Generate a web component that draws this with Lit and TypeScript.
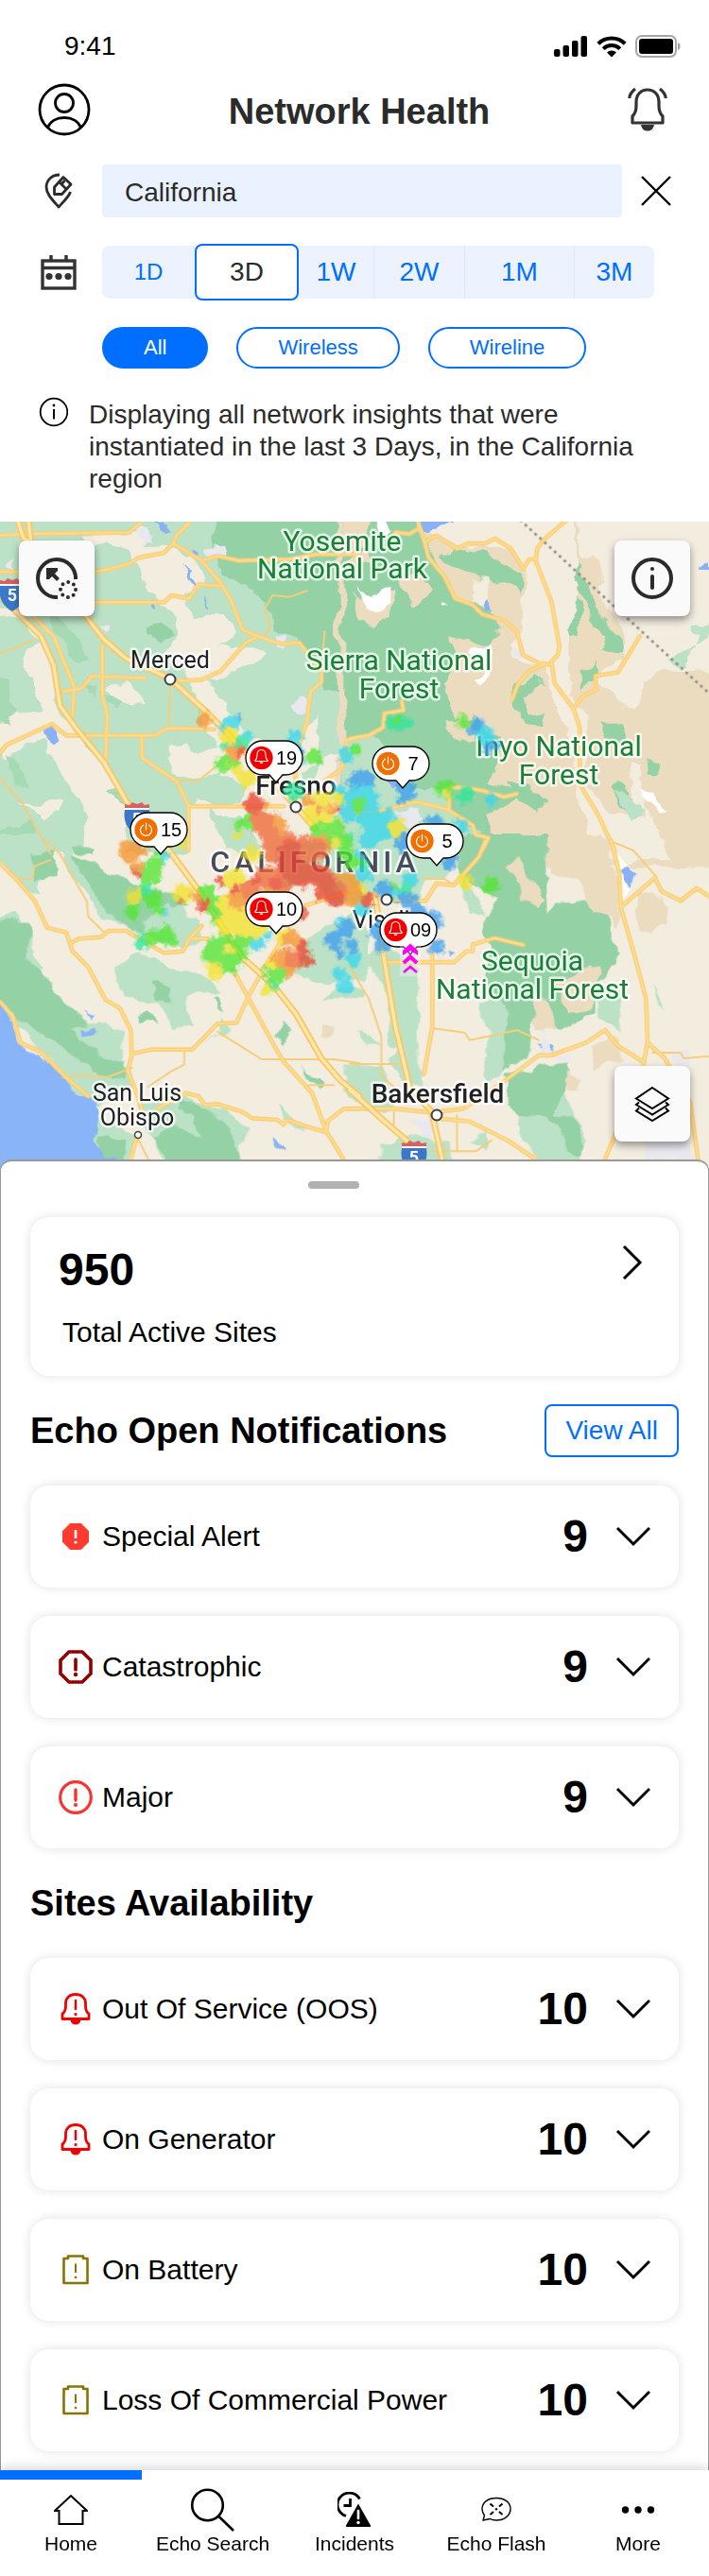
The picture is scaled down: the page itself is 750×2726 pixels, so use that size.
import { LitElement, html, css, svg, nothing } from "lit";
import { customElement, property, state } from "lit/decorators.js";
import { classMap } from "lit/directives/class-map.js";
import { styleMap } from "lit/directives/style-map.js";

const MAP_W = 750;
const MAP_H = 686;

const reset = css`
  *, *::before, *::after { box-sizing: border-box; }
  h1, h2, p, ul { margin: 0; padding: 0; }
  button { margin: 0; padding: 0; border: 0; background: none; font: inherit; color: inherit; cursor: pointer; }
  a { color: inherit; text-decoration: none; }
  svg { display: block; flex: none; }
`;

const bellPath = "M5 38V31C8 28 9 25 9 20V16C9 8 14 3 21 3S33 8 33 16V20C33 25 34 28 37 31V38Z";

const rowIcons: Record<string, unknown> = {
  special: svg`<svg width="28" height="28" viewBox="0 0 28 28"><path d="M8.200 0H19.800L28 8.200V19.800L19.800 28H8.200L0 19.800V8.200Z" fill="#ff3b30"/><path d="M14 7V16" stroke="#fff" stroke-width="2.600"/><circle cx="14" cy="20" r="1.600" fill="#fff"/></svg>`,
  catastrophic: svg`<svg width="36" height="36" viewBox="0 0 36 36"><path d="M11 2H25L34 11V25L25 34H11L2 25V11Z" fill="none" stroke="#8f0000" stroke-width="3.600"/><path d="M18 10V21" stroke="#8f0000" stroke-width="3.600" stroke-linecap="round"/><circle cx="18" cy="26" r="2.200" fill="#8f0000"/></svg>`,
  major: svg`<svg width="36" height="36" viewBox="0 0 36 36"><circle cx="18" cy="18" r="16.300" fill="none" stroke="#f53434" stroke-width="3.200"/><path d="M18 10V21" stroke="#f53434" stroke-width="3.400" stroke-linecap="round"/><circle cx="18" cy="26" r="2.100" fill="#f53434"/></svg>`,
  oos: svg`<svg width="32" height="34" viewBox="0 0 32 34"><path d="M2 27.500V22C5 20 5.500 17 5.500 14V11C5.500 5 10 1.500 16 1.500S26.500 5 26.500 11V14C26.500 17 27 20 30 22V27.500Z" fill="none" stroke="#f00000" stroke-width="2.800" stroke-linejoin="round"/><path d="M10.500 28.500H21.500C21 32 19 33.500 16 33.500S11 32 10.500 28.500Z" fill="#f00000"/><path d="M16 8V17" stroke="#f00000" stroke-width="2.400" stroke-linecap="round"/><circle cx="16" cy="22.500" r="1.600" fill="#f00000"/></svg>`,
  battery: svg`<svg width="28" height="32" viewBox="0 0 28 32"><path d="M1.500 4H6V1.500H22V4H26.500V30H1.500Z" fill="none" stroke="#857400" stroke-width="2.600" stroke-linejoin="round"/><path d="M14 9.500V19" stroke="#857400" stroke-width="2"/><circle cx="14" cy="24" r="1.300" fill="#857400"/></svg>`,
};

/* ---------- Map artwork, drawn on four quarter tiles at three units per pixel ---------- */

const land: [string, string, string[]][] = [
  ["0 -6", "#bbe2c6", [
    "M-40 -40H1160V700L1010 760 960 900 620 900 590 1100H-40Z",
  ]],
  ["0 -6", "#f3ede0", [
    "M-20 270L60 290 120 365 165 430 185 520 190 590 240 680 330 780 400 890V1070H270L275 940 230 860 150 740 150 690 90 700 20 760 0 740V640L60 610 130 620 130 580 70 470 90 400 130 390 60 330-20 300Z",
    "M270 50L430 45 460 85 540 80 640 140 640 200 590 240 610 300 700 300 750 350 730 380 690 410 780 400 830 400 850 420 800 460 740 480 660 510 740 620 800 690 900 720 935 800 935 690 1010 620 1000 760 960 800 960 900 1150 870V1070H600V910L760 900 780 850 700 800 640 600 580 460 520 440 540 400 560 310 520 270 450 200 440 130 400 90 290 80Z",
    "M340 545L400 510 420 540 460 580 430 590 350 570Z",
    "M540 715L590 710 620 740 690 740 700 790 640 830 560 800 530 760Z",
    "M60 900L110 910 150 890 200 900 190 930 130 960 110 930Z",
  ]],
  ["0 -6", "#bbe2c6", [
    "M660 920L760 950 830 1060 720 1050ZM960 820L1010 880 960 890Z",
  ]],
  ["0 -6", "#94d2a5", [
    "M700-20H1160V680L1095 640 1090 560 1030 540 1020 480 940 380 860 340 850 260 710 170 690 120 670 70Z",
    "M480 340L520 325 540 360 510 395 480 370Z",
  ]],
  ["0 -6", "#a6dab5", [
    "M160 300L210 320 260 390 280 440 240 450 190 380Z",
    "M-10 500L40 510 30 560 60 600 20 650-10 640ZM260 510L310 530 300 570 270 550ZM330 570L380 580 370 600 340 595Z",
    "M340 860L380 850 420 900 380 900ZM20 740L60 780 90 850 50 840ZM-10 990L90 960 150 1060H-10Z",
  ]],
  ["0 -6", "#e8e8ee", [
    "M420 20L470 30 480 70 455 85 430 50ZM640 85L720 80 730 110 650 110ZM920 590L960 560 985 570 970 610 930 605ZM870 360L910 370 900 410 880 400ZM315 335L340 335 335 360 320 365ZM1100 660L1140 650V690L1090 690ZM20 150L50 130 45 175 20 165Z",
  ]],
  ["0 -6", "#8ab0f5", [
    "M490 0H510L545 40 530 45ZM580 135L615 165 600 195 615 220 600 215 590 190 600 170ZM470 265L500 275 500 292 485 285ZM640 235L670 280 660 280ZM610 95L630 100 625 120 612 115ZM135 670L165 655 200 695 170 710Z",
  ]],
  ["1110 -6", "#ebdcc0", ["M-40-40H1200V1100H-40Z"]],
  ["1110 -6", "#94d2a5", [
    "M-20-20L210 0 250 90 300 180 340 250 450 300 480 340 450 400 310 370 340 440 300 520 340 640 400 640 480 700 470 780 430 830 550 870 440 940 440 1000 530 1080H-20Z",
    "M290 130L340 90 440 110 540 170 545 230 430 190 330 150Z",
    "M640 30L700 20 705 60 640 130ZM695 110L740 170 790 290 860 370 865 420 800 430 820 380 760 300 700 200Z",
    "M660 200L690 210 730 290 725 370 680 360ZM520 530L590 500 625 530 600 520 560 560 560 600 620 620 610 670 550 640 525 590Z",
    "M725 480L780 460 785 500 725 535ZM795 650L860 645 875 690 860 720 800 680ZM940 755L985 770 975 810 945 805ZM820 850L860 830 930 920 910 950 850 900ZM540 20L660 10 600 50ZM500 840L560 840 620 900 600 920 540 890Z",
  ]],
  ["1110 -6", "#f3ede0", [
    "M240-20H720V130L700 350 690 560 750 620 740 820 830 930 960 950 1010 1080H760L730 900 700 700 640 560 615 470 510 440 500 395 550 350 560 160 520 90 380 90 260 40Z",
    "M730-20H1160V480L1000 485 940 500 900 600 850 590 820 540 760 510 860 440 870 340 800 250 795 130 730 120Z",
    "M390 190L440 190 440 290 390 270ZM890 760L920 780 930 920 960 960 940 960 900 880Z",
  ]],
  ["1110 -6", "#ebdcc0", [
    "M10 230L80 260 150 220 130 300 80 350 30 330ZM150 170L230 160 270 230 200 280ZM350 200L390 200 390 270 345 240ZM-20-20H70L60 90-20 100ZM0 120L60 100 60 140-20 150Z",
    "M300 640L370 640 400 690 330 700Z",
  ]],
  ["1110 -6", "#bbe2c6", ["M-20 700L90 690 200 860 310 850 330 940 420 1000 380 1080H-20ZM1010 440L1130 380 1150 330 1070 340 1070 360 1110 365 1080 430 1060 470ZM830 860L890 870 930 930 900 950Z"]],
  ["1110 -6", "#fff", ["M25 205L75 240 130 215 130 260 100 285 60 290ZM85 0H110L130 45 110 60ZM380 410L450 400 440 490 410 525 385 510 430 470ZM290 255L310 260 295 270ZM920 850L960 870 1000 930 980 935 930 890Z"]],
  ["1110 -6", "#8ab0f5", ["M215 0H330L290 25 245 30ZM1100 155L1140 135V160L1110 165ZM425 280L440 255 450 295 430 295ZM95 830H150L140 850Z"]],
  ["1110 -6", "#e8e8ee", ["M505 410L545 420 540 445 510 435ZM130 920L220 920 240 960 200 980 150 960ZM800 1010L830 1010 825 1050H800Z"]],
  ["0 1014", "#f3ede0", ["M-40 40H1160V1100H-40Z"]],
  ["0 1014", "#bbe2c6", [
    "M-20-20H140L150 100 130 170 60 130-20 30ZM160-20L240 50 400 130 560 170 600 250 640 260 620 330 580 340 440 290 330 240 230 120Z",
    "M-20 250L60 240 100 330 130 400 40 440 80 480 180 500 210 540 300 580 390 590 390 700 430 780 300 850 200 770 100 620-20 520Z",
    "M355 400L430 360 560 400 680 450 700 480 650 490 600 490 590 530 620 590 560 600 500 510 400 500Z",
    "M430 830L540 790 640 830 700 850 780 910 780 940 740 1060H540L480 940ZM310 870L400 910 430 940 400 1070H330L300 960ZM870 20L1160-20V200L1040 190 1000 130 900 130ZM950 330L1160 200V440L1000 450 930 430ZM1020 520L1060 470 1160 460V490ZM870 830L920 860 970 930 920 900ZM650 640L700 600 710 560 740 600 680 610Z",
  ]],
  ["0 1014", "#94d2a5", [
    "M-20 260L90 260 85 370 150 440 200 520 280 580 230 600 330 690 400 700 395 770 300 740 190 650 70 570-20 490Z",
    "M220 50L320 80 460 150 560 170 600 210 490 200 440 280 400 270 320 200Z",
    "M480 440L540 470 550 520 500 500ZM440 560L470 540 500 585 440 575ZM690 490L720 550 710 550 670 500ZM900 570L925 600 900 650 880 615ZM960 720L1020 760 1010 780 970 750ZM100 40L170 30 170 110 120 130ZM230 10L300 20 290 45 240 40Z",
    "M480 930L560 910 640 940 620 870 560 860 560 830 620 830 690 870 750 950 780 1060H560ZM310 940L400 960 390 1060H340Z",
  ]],
  ["0 1014", "#ebdcc0", ["M1020 583H1062V622H1020Z"]],
  ["0 1014", "#8ab4f8", ["M-40 512L0 525 40 570 55 640 130 685 200 755 230 790 290 820 320 860 315 890 300 950 330 990 370 1010 380 1100H-40ZM265 545L300 555 290 565ZM255 600L300 590 310 610 260 612ZM865 945L900 975 895 985 870 970Z"]],
  ["1110 1014", "#bbe2c6", [
    "M-20-20H350L330 100 240 130 220 190 0 170ZM30 380L100 340 220 400 215 640 230 780 180 780 110 700 150 650 110 640 130 560 110 440ZM410 520L520 480 490 740 450 760 420 730 440 600ZM350 60L430 240 380 240ZM780 460L870 470 850 610 780 560ZM-20 700L100 720 140 830 80 870-20 800ZM90 950L200 940 330 960 320 1060H90ZM550 830L640 780 720 860 740 940 730 1060H620L540 930ZM385 950L430 930 430 990ZM955 455L1000 530 975 520ZM30 600L100 650 40 660Z",
  ]],
  ["1110 1014", "#94d2a5", [
    "M350-20H640L620 50 630 240 660 190 800 200 860 370 770 460 770 540 660 600 620 590 590 570 560 690 490 730 490 620 500 530 470 490 420 460 450 340 410 280 470 180 360 110Z",
    "M500 740L580 730 600 710 690 700 700 760 650 830 650 860 720 880 740 1000 710 1000 660 900 600 870 540 880 500 840ZM790 650L830 660 820 700 790 710 775 690Z",
  ]],
  ["1110 1014", "#ebdcc0", [
    "M640-20H810L850 120 860 250 850 290 820 230 790 220 760 210 720 130 640 100 650 60ZM490 90L540 50 580 120 620 190 600 220 540 190 540 140ZM640 450L760 400 790 410 760 530 700 550 670 500ZM580 480L620 500 650 600 600 600ZM690 730L740 760 720 790 690 790ZM920 160L990 180 1005 250 970 290 920 280 905 230ZM1000-20H1160V90L1080 90 1060 30ZM770 650L850 620 860 690 780 730Z",
  ]],
  ["1110 1014", "#fff", ["M850 30L890 70 915 100 860 190Z"]],
  ["1110 1014", "#8ab0f5", ["M860 90L885 70 915 100 885 145ZM590 650L650 655 645 675 595 670ZM320 350H350L330 370Z"]],
  ["1110 1014", "#e8e8ee", ["M590 690L620 600 640 680ZM200 900L250 880 270 950 220 940ZM940 960L1060 880 1080 1010H935ZM1030 670L1080 655 1075 730 1040 720ZM650 680L720 670 700 700Z"]],
];

const highways: [string, string][] = [
  ["0 -6", "M0 240L130 370 170 460 190 590 240 660 330 770 405 900 500 1020 540 1060M55 0L75 60 120 80M90 0L105 130M230 240L275 310 330 380 400 440 540 505 660 615 800 760 930 900 1000 980"],
  ["0 1014", "M530 20L640 170 770 370 870 460 940 550 1020 690 1080 760 1140 810"],
  ["1110 1014", "M0 790L110 890 180 950 230 1020M80 170L105 350 145 590 190 780 260 860 295 1020"],
];

const roads: [string, string][] = [
  ["0 -6", "M0 50L75 45 270 42 410 40 445 10M0 165H60M300 165L330 160 410 140 440 120 520 105 550 75 560 50 600 10M550 75L640 130 700 200 735 260 770 350 860 385 900 395 950 390 1020 480 1020 515 985 545 975 640 940 740 935 900M300 262H520L545 240 600 250 630 205 700 210M200 545L260 535 290 497 460 503M560 512L640 508 700 480 780 390 810 375M325 400V560L340 620 335 760M110 310L170 370 235 530 230 620M0 740L20 715 165 648 210 685H490L530 662 680 665M450 690V755L560 830 600 910H900M598 910V1050M640 130L690 115 760 130 920 125 1000 110 1140 110M1140 690L1100 700 1085 790 1030 830"],
  ["1110 -6", "M145 40L190 45 215 30M215 0L240 80 250 120 300 180 335 250 390 270 420 300 490 320 530 355 550 430 600 455 640 460M240 70L275 50 340 92 375 75 430 75 460 60 510 90 550 155 570 125 590 125M690 0L620 60 595 90 590 130 640 260 665 400 660 430 640 450 650 520 710 600 730 660 730 840 790 940 840 1050M710 600L740 560 780 540 780 495 850 485 890 420 920 370M620 458L570 480 535 520 515 570M0 695L60 685 105 660 110 615 170 605 165 575M0 930L100 925 210 895 310 920 390 970 400 1000 440 1010 420 1050M315 920V850H365L430 862 490 880 530 870"],
  ["0 1014", "M0 70L50 120 110 190 150 275 210 290 230 350 280 400 335 505 380 530 415 600 418 680 405 730 430 790 450 850M225 325L250 310 320 305 345 285 400 285 440 310 520 355 580 350 600 310 640 270M0 510L40 555 65 640 130 670 210 750 280 810M420 675L480 662H610L690 580 750 577 790 490 840 400 890 320M740 410L800 520 870 650 900 700 990 800 1035 920 1090 1010M1140 850H1090L1040 890 1035 925 970 905 910 885 900 900 880 885 800 880 770 860 690 835 650 838 630 810 590 800 500 850M435 935L415 1010M600 310H660M970 205L1140 150"],
  ["1110 1014", "M262 360V590L235 740M110 385H330L370 350 390 350V328L460 308 550 330M0 850H140L260 862 360 850 480 770 600 680 640 680 750 640 810 600 850 650 930 700M830 0L855 100 860 210 900 350 940 500 945 640 930 720 810 1010M860 210L970 115M945 640L1000 690 1080 830 1105 1010M900 100M970 120L990 160 1050 190 1100 150 1140 175M270 880L380 890 500 950 590 1010M430 0L410 50 330 140 275 135 240 190H120"],
];

const lanes: [string, string][] = [
  ["0 -6", "M0 425L50 405 110 380M540 520L535 660M0 820L70 900 100 950 160 1060M570 828H630L690 780M865 240L920 245 975 225M865 240L840 285 860 340 840 370M1030 355L1020 480"],
  ["0 1014", "M150 0L190 40 240 130 275 190 280 240 330 290M50 120L100 120 110 80 160 60M690 605L830 693H1060L1140 705M200 750L250 743 340 750 420 720M585 670V710L545 730 470 780M440 950L470 1010M980 775H1060"],
  ["1110 1014", "M0 400L60 500 100 620 100 745 150 790M265 595L365 608 380 632 450 618 530 600 600 632M0 708H150M140 860V900M340 870V980M260 985H400L450 950M1140 683L1060 690 1050 672H960M840 5L900 30 970 110M230 120H300L330 140"],
];

const heat: [string, number[][]][] = [
  ["#3c9ef0", [[770,250,42],[380,50,16],[915,275,32],[905,295,20],[1140,72,27],[1180,130,27],[1005,375,26],[1050,500,26],[905,440,30],[845,590,29],[915,620,28],[720,710,32],[685,750,30],[740,770,22],[830,720,32],[1000,690,32],[1010,775,27],[835,765,26],[950,655,28],[700,790,16],[565,160,28]]],
  ["#38d6ee", [[360,60,26],[405,105,22],[335,80,20],[560,112,26],[575,180,18],[140,490,20],[148,660,14],[440,765,22],[475,740,16],[720,165,27],[785,300,44],[740,300,36],[700,280,24],[800,365,42],[835,400,36],[850,365,30],[795,430,32],[1165,98,28],[1180,305,21],[1090,390,26],[780,540,26],[775,650,24],[720,892,28],[745,812,27],[925,560,24],[880,600,20],[700,855,20],[730,350,26],[930,700,26],[760,480,22],[700,690,14]]],
  ["#2fe69a", [[395,120,22],[560,280,32],[880,58,26],[915,62,20],[80,752,28],[1100,290,30],[485,890,22],[910,585,16],[85,590,20],[345,130,22],[730,430,22],[780,510,18]]],
  ["#52e632", [[330,190,26],[365,190,22],[100,540,36],[120,505,26],[45,660,24],[110,620,30],[130,655,18],[150,735,30],[110,740,26],[175,755,16],[330,775,48],[300,790,36],[375,790,38],[350,825,34],[310,640,34],[280,600,26],[500,850,36],[420,370,26],[395,380,22],[680,400,38],[650,425,34],[720,440,26],[765,322,22],[622,170,27],[755,145,18],[1182,575,28],[1035,270,30],[720,475,24],[640,390,30],[745,500,24],[885,52,12],[1092,60,22],[330,680,34],[400,740,30],[880,580,12]]],
  ["#f2e22e", [[350,102,28],[410,235,28],[380,215,18],[200,440,20],[50,612,27],[205,600,32],[370,560,38],[390,690,46],[345,700,36],[430,710,38],[480,680,30],[470,908,22],[305,846,27],[620,350,30],[650,305,30],[655,360,24],[700,300,20],[420,478,28],[530,740,28],[885,392,27],[1100,565,25],[500,820,26],[760,585,28],[378,415,16],[350,640,36],[560,640,24],[350,780,16],[690,440,20],[1040,285,14],[360,200,10]]],
  ["#f5942c", [[275,50,26],[370,152,24],[35,470,34],[65,465,26],[470,320,14],[605,305,18],[640,335,16],[725,580,44],[745,610,32],[545,745,26],[430,625,40],[380,620,30],[500,600,40],[525,810,34],[550,840,26],[250,610,18],[60,520,20],[500,420,34],[500,380,32],[555,650,30],[640,450,34],[680,335,18],[570,760,24]]],
  ["#ee6a38", [[455,375,36],[480,410,32],[500,460,44],[585,465,46],[625,465,38],[470,550,38],[420,585,32],[520,560,36],[690,600,38],[560,810,28],[655,560,42],[540,430,28]]],
  ["#e8452f", [[430,318,31],[545,465,36],[540,515,38],[580,540,44],[625,545,38],[655,570,34],[440,560,20],[370,595,16],[500,570,22],[690,615,26],[645,610,20],[795,620,22],[268,640,20],[585,775,24],[592,815,22],[388,150,14],[700,335,10],[322,565,12],[585,670,14],[60,540,10],[575,650,14],[195,625,7]]],
];

interface Pin { x: number; y: number; count: string; kind: "bell" | "power"; }
const pins: Pin[] = [
  { x: 259, y: 231, count: "19", kind: "bell" },
  { x: 393, y: 237, count: "7", kind: "power" },
  { x: 137, y: 307, count: "15", kind: "power" },
  { x: 429, y: 319, count: "5", kind: "power" },
  { x: 259, y: 391, count: "10", kind: "bell" },
  { x: 401, y: 413, count: "09", kind: "bell" },
];

@customElement("insight-map")
export class InsightMap extends LitElement {
  static styles = [reset, css`
    :host { display: block; position: relative; overflow: hidden; background: #f3ede0; }
    .art { width: 100%; height: auto; }
    .park, .town { font-family: Roboto, sans-serif; text-anchor: middle; paint-order: stroke; stroke: rgba(255, 255, 255, 0.75); stroke-width: 5px; stroke-linejoin: round; }
    .park { font-size: 30px; fill: #1a8038; }
    .town { font-size: 25px; fill: #202124; }
    .city { font-size: 28px; font-weight: 500; }
    .state { font-size: 32px; font-weight: 500; letter-spacing: 4px; fill: #474c5a; }
    .start { text-anchor: start; }
    .route { font-family: Roboto, sans-serif; font-size: 18px; font-weight: 700; fill: #fff; text-anchor: middle; }
    .pin { position: absolute; width: 62px; height: 46px; }
    .bubble { position: absolute; inset: 0; }
    .count { position: absolute; left: 30px; top: 7px; width: 28px; font: 20px/24px "Liberation Sans", Arial, sans-serif; color: #000; text-align: center; }
    .arrows { position: absolute; }
    .tool { position: absolute; display: grid; place-items: center; width: 80px; height: 80px; border-radius: 8px; background: #fafafa; box-shadow: 0 4px 8px rgba(0, 0, 0, 0.4); }
    .locate { left: 20px; top: 20px; }
    .info { right: 20px; top: 20px; }
    .layers { right: 20px; bottom: 30px; }
  `];

  private strokes(list: [string, string][], color: string, width: number) {
    return list.map(([at, d]) => svg`<path transform="translate(${at})" d=${d} fill="none" stroke=${color} stroke-width=${width} stroke-linejoin="round" stroke-linecap="round"/>`);
  }

  private shield(x: number, y: number) {
    return svg`<g transform="translate(${x} ${y})">
      <path d="M-13 -15L-8 -14 -5 -17 0 -15 5 -17 8 -14 13 -15V-11H-13Z" fill="#d9605f"/>
      <path d="M-13 -11H13V-9H-13Z" fill="#fff"/>
      <path d="M-13 -9H13C15 2 11 12 0 18C-11 12 -15 2 -13 -9Z" fill="#3b78c9"/>
      <text class="route" x="0" y="7">5</text>
    </g>`;
  }

  private pin(p: Pin) {
    const at = { left: `${(p.x / MAP_W) * 100}%`, top: `${(p.y / MAP_H) * 100}%` };
    return html`<button class="pin" style=${styleMap(at)} aria-label="${p.count} sites">
      <svg class="bubble" width="62" height="46" viewBox="0 0 62 46">
        <path d="M19 1H43A18 18 0 0 1 43 37H40L33 45 26 37H19A18 18 0 0 1 19 1Z" fill="#fff" stroke="#000" stroke-width="1.300"/>
        <circle cx="17.500" cy="19" r="12.200" fill=${p.kind === "bell" ? "#f00000" : "#ef7000"}/>
        ${p.kind === "bell"
          ? svg`<path d="M11 22.500V21.500C13 20 13 18 13 16C13 12.500 15 10.500 17.500 10.500S22 12.500 22 16C22 18 22 20 24 21.500V22.500Z" fill="none" stroke="#fff" stroke-width="1.100"/><path d="M15.500 23.500H19.500C19 25.500 16 25.500 15.500 23.500Z" fill="#fff"/>`
          : svg`<path d="M14.500 14.200A6 6 0 1 0 20.500 14.200M17.500 12V19" fill="none" stroke="#fff" stroke-width="1.200" stroke-linecap="round"/>`}
      </svg>
      <span class="count">${p.count}</span>
    </button>`;
  }

  render() {
    const arrowsAt = { left: `${(423 / MAP_W) * 100}%`, top: `${(445 / MAP_H) * 100}%` };
    return html`
      <svg class="art" viewBox="0 0 ${MAP_W} ${MAP_H}" role="img" aria-label="Network map of California">
        <defs>
          <filter id="coast" x="0" y="0" width="100%" height="100%" color-interpolation-filters="sRGB"><feTurbulence type="fractalNoise" baseFrequency="0.040" numOctaves="3" seed="4"/><feDisplacementMap in="SourceGraphic" scale="16" xChannelSelector="R" yChannelSelector="G"/></filter>
          <filter id="ragged" x="-5%" y="-5%" width="110%" height="110%" color-interpolation-filters="sRGB"><feGaussianBlur in="SourceGraphic" stdDeviation="1.600" result="soft"/><feTurbulence type="fractalNoise" baseFrequency="0.110" numOctaves="3" seed="9"/><feDisplacementMap in="soft" scale="13" xChannelSelector="R" yChannelSelector="G"/></filter>
        </defs>
        <g filter="url(#coast)"><g transform="scale(.33333)">
          ${land.map(([at, fill, shapes]) => shapes.map((d) => svg`<path transform="translate(${at})" d=${d} fill=${fill}/>`))}
        </g></g>
        <g transform="scale(.33333)">
          ${this.strokes(lanes, "#f5cd7c", 6)}
          ${this.strokes(roads, "#fbcd72", 14)}
          ${this.strokes(roads, "#fddc93", 6)}
          ${this.strokes(highways, "#fac666", 21)}
          ${this.strokes(highways, "#fee7ab", 10)}
          <path d="M1650 -6L2250 545" fill="none" stroke="#8d8d85" stroke-width="8" stroke-dasharray="9 12"/>
        </g>
        ${this.shield(13, 77)} ${this.shield(145, 314)} ${this.shield(438, 672)}
        <text class="park" x="362" y="31">Yosemite</text>
        <text class="park" x="362" y="60">National Park</text>
        <text class="park" x="422" y="157">Sierra National</text>
        <text class="park" x="422" y="187">Forest</text>
        <text class="park" x="591" y="248">Inyo National</text>
        <text class="park" x="591" y="278">Forest</text>
        <text class="park" x="563" y="475">Sequoia</text>
        <text class="park" x="563" y="505">National Forest</text>
        <text class="town" x="180" y="155">Merced</text>
        <text class="town city" x="313" y="289">Fresno</text>
        <text class="town state" x="333" y="371">CALIFORNIA</text>
        <text class="town start" x="373" y="430">Visalia</text>
        <text class="town" x="145" y="613">San Luis</text>
        <text class="town" x="145" y="639">Obispo</text>
        <text class="town city" x="463" y="615">Bakersfield</text>
        <g opacity=".78" filter="url(#ragged)"><g transform="scale(.33333) translate(375 579)">
          ${heat.map(([fill, dots]) => svg`<g fill=${fill}>${dots.map(([x, y, r]) => svg`<circle cx=${x} cy=${y} r=${r}/>`)}</g>`)}
        </g></g>
        <g fill="#fff" stroke="#3c4043" stroke-width="2">
          <circle cx="180" cy="167" r="5.500"/><circle cx="313" cy="302" r="5.500"/><circle cx="409" cy="400" r="5.500"/>
          <circle cx="462" cy="628" r="5.500"/><circle cx="146" cy="649" r="3.500" stroke-width="1.500"/>
        </g>
      </svg>
      ${pins.map((p) => this.pin(p))}
      <svg class="arrows" style=${styleMap(arrowsAt)} width="22" height="36" viewBox="0 0 22 36">
        <path d="M0 4H22V36H0Z" fill="#fff" opacity=".3"/>
        <path d="M3 13V9L11 1.500 19 9V14L11 9 3 14Z" fill="#f0f"/>
        <path d="M4 22L11 15.500 18 22" fill="none" stroke="#f0f" stroke-width="4"/>
        <path d="M4 32L11 26 18 32" fill="none" stroke="#f0f" stroke-width="2.500"/>
      </svg>
      <button class="tool locate" aria-label="Select area">
        <svg width="44" height="44" viewBox="0 0 44 44" fill="none" stroke="#2b2b2b">
          <path d="M23 42A20 20 0 1 1 42 23" stroke-width="4"/>
          <path d="M14 14L23.500 23.500" stroke-width="4"/><path d="M11 11H23V14L14 23H11Z" fill="#2b2b2b" stroke="none"/>
          <circle cx="34" cy="34" r="8" stroke-width="4" stroke-linecap="round" stroke-dasharray="0 6.280"/>
        </svg>
      </button>
      <button class="tool info" aria-label="Map information">
        <svg width="44" height="44" viewBox="0 0 44 44" fill="none" stroke="#2b2b2b" stroke-width="4">
          <circle cx="22" cy="22" r="20"/><path d="M22 20V32" stroke-linecap="round"/><circle cx="22" cy="12" r="2" fill="#2b2b2b" stroke="none"/>
        </svg>
      </button>
      <button class="tool layers" aria-label="Layers">
        <svg width="38" height="38" viewBox="0 0 38 38" fill="none" stroke="#000" stroke-width="2">
          <path d="M19 2L36 13.500 19 24 2 13.500Z"/><path d="M5 17.500L2 20 19 30.500 36 20 33 17.500"/><path d="M5 23.500L2 26.500 19 37 36 26.500 33 23.500"/>
        </svg>
      </button>
    `;
  }
}

@customElement("site-row")
export class SiteRow extends LitElement {
  @property() label = "";
  @property() icon = "";
  @property({ type: Number }) count = 0;
  @state() private open = false;

  static styles = [reset, css`
    :host { display: block; }
    .row { display: flex; align-items: center; width: 100%; min-height: 108px; padding: 0 30px; border-radius: 20px; background: #fff; box-shadow: 0 0 12px rgba(0, 0, 0, 0.12); color: #000; text-align: left; }
    .icon { display: grid; place-items: center; width: 36px; margin-right: 10px; }
    .label { flex: 1; font-size: 30px; line-height: 36px; }
    .count { margin-right: 28px; font-size: 48px; font-weight: 700; line-height: 56px; }
  `];

  render() {
    return html`<button class="row" aria-expanded=${this.open} @click=${() => (this.open = !this.open)}>
      <span class="icon">${rowIcons[this.icon]}</span>
      <span class="label">${this.label}</span>
      <span class="count">${this.count}</span>
      <svg width="38" height="24" viewBox="0 0 38 24" fill="none" stroke="#000" stroke-width="3"><path d="M3 3L20 20 37 3"/></svg>
    </button>`;
  }
}

@customElement("app-root")
export class AppRoot extends LitElement {
  @state() private range = "3D";
  @state() private kind = "All";
  @state() private region = "California";

  static styles = [reset, css`
    :host { display: block; background: #fff; color: #2b2b2b; font-family: "Liberation Sans", Arial, sans-serif; font-size: 28px; line-height: 34px; }
    .status { display: flex; justify-content: space-between; align-items: center; padding: 32px 30px 0 68px; color: #000; }
    .signals { display: flex; align-items: center; gap: 9px; height: 28px; }
    .top { display: flex; justify-content: space-between; align-items: center; padding: 22px 44px 0 40px; }
    .title { padding-top: 4px; font-size: 38px; line-height: 44px; font-weight: 700; }
    .filters { display: grid; gap: 30px; padding: 30px 40px 28px; }
    .line { display: flex; align-items: center; }
    .lead { display: grid; place-items: center; width: 44px; margin-right: 24px; flex: none; }
    .place { flex: 1; min-width: 0; height: 56px; padding: 4px 24px 0; border: 0; border-radius: 4px; background: #eaf2ff; font: inherit; color: inherit; }
    .clear { margin-left: 20px; }
    .ranges { flex: 1; display: grid; grid-template-columns: 98fr 110fr 80fr 96fr 116fr 84fr; margin-right: 18px; height: 56px; border-radius: 8px; background: #ecf3ff; color: #006fff; }
    .range { border-right: 1px solid #dfe8fb; }
    .range:first-child, .range:last-child { border-right: 0; }
    .range.small { font-size: 24px; }
    .range.on { margin: -2px 0; border: 2px solid #006fff; border-radius: 8px; background: #fff; color: #2b2b2b; }
    .kinds { display: flex; gap: 30px; margin-left: 68px; }
    .kind { height: 44px; padding: 0 42px; border: 2px solid #006fff; border-radius: 22px; color: #006fff; font-size: 22px; line-height: 28px; }
    .kind.on { background: #006fff; color: #fff; }
    .note { display: flex; gap: 22px; }
    .text { padding-top: 2px; }
    .sheet { position: relative; display: flex; flex-direction: column; gap: 30px; margin-top: -11px; padding: 21px 31px 20px; border: 1px solid #999; border-top-width: 2px; border-bottom: 0; border-radius: 12px 12px 0 0; background: #fff; color: #000; }
    .handle { align-self: center; width: 54px; height: 8px; margin-right: 44px; border-radius: 4px; background: #b1b1b1; }
    .total { display: flex; justify-content: space-between; align-items: flex-start; padding: 28px 30px; border-radius: 20px; background: #fff; box-shadow: 0 0 12px rgba(0, 0, 0, 0.12); }
    .figures { display: grid; gap: 20px; }
    .amount { font-size: 48px; font-weight: 700; line-height: 56px; }
    .caption { padding-left: 4px; font-size: 30px; line-height: 36px; }
    .head { display: flex; justify-content: space-between; align-items: center; min-height: 56px; }
    .heading { font-size: 38px; line-height: 44px; font-weight: 700; }
    .all { height: 56px; padding: 0 20px; border: 2px solid #006fff; border-radius: 8px; color: #006fff; }
    .nav { position: relative; display: grid; grid-template-columns: repeat(5, 1fr); height: 112px; background: #fff; box-shadow: 0 -2px 12px rgba(0, 0, 0, 0.18); color: #000; font-size: 21px; line-height: 24px; }
    .tab { display: flex; flex-direction: column; align-items: center; padding-top: 8px; border-top: 10px solid transparent; }
    .tab.on { border-top-color: #006fff; }
    .glyph { display: grid; place-items: center; height: 48px; }
  `];

  private tab(label: string, icon: unknown, on = false) {
    return html`<a class=${classMap({ tab: true, on })} href="#" aria-current=${on ? "page" : nothing}><span class="glyph">${icon}</span><span>${label}</span></a>`;
  }

  render() {
    const alerts = [["Special Alert", "special"], ["Catastrophic", "catastrophic"], ["Major", "major"]];
    const sites = [["Out Of Service (OOS)", "oos"], ["On Generator", "oos"], ["On Battery", "battery"], ["Loss Of Commercial Power", "battery"]];
    return html`
      <div class="status">
        <span>9:41</span>
        <span class="signals">
          <svg width="36" height="22" viewBox="0 0 36 22"><rect y="14" width="6.500" height="8" rx="2"/><rect x="9.500" y="10" width="6.500" height="12" rx="2"/><rect x="19" y="5" width="6.500" height="17" rx="2"/><rect x="28.500" width="6.500" height="22" rx="2"/></svg>
          <svg width="32" height="23" viewBox="0 0 32 23" fill="none" stroke="#000" stroke-width="4"><path d="M1.800 8.300A20.500 20.500 0 0 1 30.200 8.300"/><path d="M7.200 13.600A12.600 12.600 0 0 1 24.800 13.600"/><path d="M11 17.600A7 7 0 0 1 21 17.600L16 22.600Z" fill="#000" stroke="none"/></svg>
          <svg width="48" height="24" viewBox="0 0 48 24"><rect x="1" y="1" width="42" height="22" rx="6" fill="none" stroke="#a6a6a6" stroke-width="2"/><rect x="4" y="4" width="36" height="16" rx="3"/><path d="M45 8C48.500 9 48.500 15 45 16Z" fill="#a6a6a6"/></svg>
        </span>
      </div>
      <header class="top">
        <button aria-label="Profile"><svg width="56" height="56" viewBox="0 0 56 56" fill="none" stroke="#000" stroke-width="2.800"><circle cx="28" cy="28" r="26"/><circle cx="28" cy="21" r="9.500"/><path d="M10.500 47C13 40 20 36.500 28 36.500S43 40 45.500 47"/></svg></button>
        <h1 class="title">Network Health</h1>
        <button aria-label="Notifications"><svg width="42" height="48" viewBox="0 0 42 48" fill="none" stroke="#333" stroke-width="3.200" stroke-linejoin="round"><path d=${bellPath}/><path d="M1.800 12C2 8 4 5 8 2M40.200 12C40 8 38 5 34 2"/><path d="M14 40H28C27 44.500 25 46.500 21 46.500S15 44.500 14 40Z" fill="#333" stroke="none"/></svg></button>
      </header>
      <div class="filters">
        <div class="line">
          <label class="lead" for="place">
            <svg role="img" aria-label="Region" width="30" height="38" viewBox="0 0 30 38" fill="none" stroke="#2b2b2b" stroke-width="2.800" stroke-linejoin="round"><path d="M16 2C8 2 2 7.500 2 15C2 22 8 28 15 36C21 29.500 26 25 27.500 20"/><path d="M10.500 22.500V15L20 4.500 28 12 18.500 22.500Z"/><path d="M15.500 9.500L23 17M18 12L21.500 8"/></svg>
          </label>
          <input id="place" class="place" type="text" .value=${this.region} @input=${(e: Event) => (this.region = (e.target as HTMLInputElement).value)} />
          <button class="clear" aria-label="Clear" @click=${() => (this.region = "")}><svg width="32" height="32" viewBox="0 0 32 32" stroke="#000" stroke-width="2.400"><path d="M1 1L31 31M31 1L1 31"/></svg></button>
        </div>
        <div class="line">
          <span class="lead"><svg width="38" height="38" viewBox="0 0 38 38" fill="none" stroke="#333"><rect x="2" y="7" width="34" height="29" stroke-width="3.400"/><path d="M2 14.500H36M11 1V8M27 1V8" stroke-width="3.400"/><g fill="#333" stroke="none"><circle cx="9" cy="23.500" r="3.600"/><circle cx="19" cy="23.500" r="3.600"/><circle cx="29" cy="23.500" r="3.600"/></g></svg></span>
          <div class="ranges" role="group" aria-label="Time range">
            ${["1D", "3D", "1W", "2W", "1M", "3M"].map((r) => html`<button class=${classMap({ range: true, on: r === this.range, small: r === "1D" })} aria-pressed=${r === this.range} @click=${() => (this.range = r)}>${r}</button>`)}
          </div>
        </div>
        <div class="kinds" role="group" aria-label="Network type">
          ${["All", "Wireless", "Wireline"].map((k) => html`<button class=${classMap({ kind: true, on: k === this.kind })} aria-pressed=${k === this.kind} @click=${() => (this.kind = k)}>${k}</button>`)}
        </div>
        <div class="note">
          <svg width="32" height="32" viewBox="0 0 32 32" fill="none" stroke="#000" stroke-width="1.800"><circle cx="17" cy="16" r="14.300"/><path d="M17 13V23.500" stroke-width="2"/><circle cx="17" cy="9" r="1.400" fill="#000" stroke="none"/></svg>
          <p class="text">Displaying all network insights that were instantiated in the last 3 Days, in the California region</p>
        </div>
      </div>
      <insight-map></insight-map>
      <main class="sheet">
        <div class="handle"></div>
        <a class="total" href="#">
          <span class="figures"><span class="amount">950</span><span class="caption">Total Active Sites</span></span>
          <svg width="38" height="40" viewBox="0 0 38 40" fill="none" stroke="#000" stroke-width="3"><path d="M10 3L27 20 10 37"/></svg>
        </a>
        <div class="head"><h2 class="heading">Echo Open Notifications</h2><button class="all">View All</button></div>
        ${alerts.map(([label, icon]) => html`<site-row label=${label} icon=${icon} count="9"></site-row>`)}
        <div class="head"><h2 class="heading">Sites Availability</h2></div>
        ${sites.map(([label, icon]) => html`<site-row label=${label} icon=${icon} count="10"></site-row>`)}
      </main>
      <nav class="nav" aria-label="Main">
        ${this.tab("Home", svg`<svg width="36" height="34" viewBox="0 0 36 34" fill="none" stroke="#000" stroke-width="2"><path d="M1 18H5.500V32H30.500V18H35L18 2Z"/></svg>`, true)}
        ${this.tab("Echo Search", svg`<svg width="48" height="46" viewBox="0 0 48 46" fill="none" stroke="#000" stroke-width="2.600"><circle cx="18.500" cy="18" r="16.300"/><path d="M30 29.500L46 45"/></svg>`)}
        ${this.tab("Incidents", svg`<svg width="36" height="38" viewBox="0 0 36 38"><path d="M9 25.500A12.500 12.500 0 1 1 23.500 7.500M13.500 7V14.500H6.500" fill="none" stroke="#000" stroke-width="2.800"/><path d="M22 12.500L35 35.500Q35.500 37 34 37H10Q8.500 37 9 35.500Z"/><path d="M22 20V28" stroke="#fff" stroke-width="2.600" stroke-linecap="round"/><circle cx="22" cy="32.500" r="1.700" fill="#fff"/></svg>`)}
        ${this.tab("Echo Flash", svg`<svg width="32" height="28" viewBox="0 0 32 28" fill="none" stroke="#000" stroke-width="1.400"><path d="M3.500 20C1.500 17.500 1 15.500 1 13C1 6 7.500 1.500 16 1.500S31 6 31 13S24.500 25 16 25C13 25 11 24.500 9.500 23.500L2 25Z" stroke-linejoin="round"/><path d="M9.500 7.500L13 10.500M22.500 7.500L19 10.500M9.500 19L13 16M22.500 19L19 16" stroke-width="2"/><circle cx="16" cy="13.200" r="1.200" fill="#000" stroke="none"/></svg>`)}
        ${this.tab("More", svg`<svg width="36" height="8" viewBox="0 0 36 8"><circle cx="4.500" cy="4" r="3.700"/><circle cx="18" cy="4" r="3.700"/><circle cx="31.500" cy="4" r="3.700"/></svg>`)}
      </nav>
    `;
  }
}
